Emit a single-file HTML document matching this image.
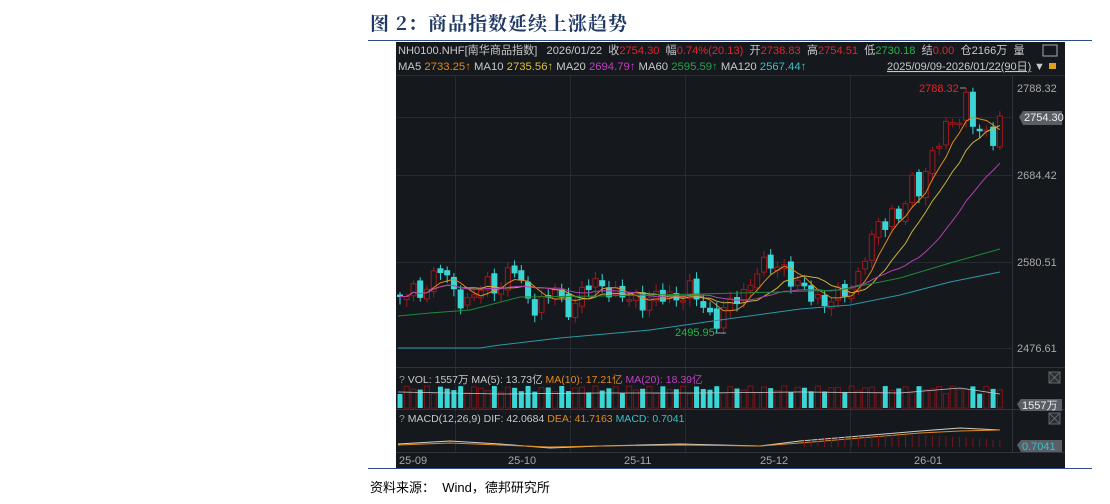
<!DOCTYPE html>
<html><head><meta charset="utf-8">
<style>
body{margin:0;width:1110px;height:504px;background:#fff;position:relative;overflow:hidden;font-family:"Liberation Sans","Noto Sans CJK SC",sans-serif}
.t{position:absolute;white-space:nowrap}
#chart{position:absolute;left:396px;top:42px;width:669px;height:426px;background:#15181d}
</style></head><body>
<div class="t" style="left:370px;top:9px;font-size:19px;font-weight:bold;color:#1f3864;font-family:'Noto Serif CJK SC','Liberation Serif',serif;letter-spacing:1px">图 2：商品指数延续上涨趋势</div>
<div style="position:absolute;left:368px;top:40px;width:724px;height:1px;background:#2f4a8a"></div>
<div style="position:absolute;left:368px;top:468px;width:724px;height:1px;background:#2f4a8a"></div>
<div class="t" style="left:370px;top:477px;font-size:13px;color:#000">资料来源：&nbsp; Wind，德邦研究所</div>
<svg id="chart" width="669" height="426" viewBox="396 42 669 426" xmlns="http://www.w3.org/2000/svg" font-family="Liberation Sans, Noto Sans CJK SC, sans-serif" font-size="11">
<rect x="396" y="42" width="669" height="426" fill="#15181d"/>
<g id="grid" stroke="#262a31" stroke-width="1"></g>
<line x1="1012.5" y1="75" x2="1012.5" y2="452" stroke="#30343b"/>
<line x1="396" y1="75.5" x2="1065" y2="75.5" stroke="#2a2e35"/>
<line x1="396" y1="367.5" x2="1065" y2="367.5" stroke="#30343b"/>
<line x1="396" y1="409.5" x2="1065" y2="409.5" stroke="#30343b"/>
<line x1="396" y1="452.5" x2="1065" y2="452.5" stroke="#30343b"/>
<g id="plot"></g>
<text x="398" y="54" fill="#c8c8c8" font-size="11.1">NH0100.NHF[南华商品指数]&#160;&#160; 2026/01/22&#160; 收<tspan fill="#e0262b">2754.30</tspan>&#160; 幅<tspan fill="#e0262b">0.74%(20.13)</tspan>&#160; 开<tspan fill="#e0262b">2738.83</tspan>&#160; 高<tspan fill="#e0262b">2754.51</tspan>&#160; 低<tspan fill="#27b34a">2730.18</tspan>&#160; 结<tspan fill="#e0262b">0.00</tspan>&#160; 仓2166万&#160; 量</text>
<rect x="1043" y="45" width="14" height="11" fill="none" stroke="#aaa"/>
<text x="398" y="70" fill="#c8c8c8" font-size="11.3">MA5 <tspan fill="#e08a1e">2733.25↑</tspan> MA10 <tspan fill="#d8c23a">2735.56↑</tspan> MA20 <tspan fill="#c040c0">2694.79↑</tspan> MA60 <tspan fill="#2aa04a">2595.59↑</tspan> MA120 <tspan fill="#39c0c8">2567.44↑</tspan></text>
<text x="887" y="70" fill="#c8c8c8" text-decoration="underline">2025/09/09-2026/01/22(90日)</text>
<text x="1034" y="70" fill="#c8c8c8">▼</text>
<rect x="1049" y="63" width="7" height="6" fill="#e0a020"/>
<g fill="#a8a8a8">
<text x="1017" y="92">2788.32</text><text x="1017" y="179">2684.42</text><text x="1017" y="266">2580.51</text><text x="1017" y="352">2476.61</text>
</g>
<path d="M1019 117 l4 -6 h39 v14 h-39z" fill="#5a5e66"/>
<text x="1024" y="121" fill="#eee">2754.30</text>
<text x="919" y="92" fill="#e0262b">2788.32</text><path d="M960 88 h6" stroke="#999"/>
<text x="675" y="336" fill="#27b34a">2495.95</text><path d="M715 333 h11" stroke="#999"/>
<text x="399" y="383" fill="#c8c8c8" font-size="10.5"><tspan fill="#999">?</tspan> VOL: 1557万 MA(5): 13.73亿 <tspan fill="#e08a1e">MA(10): 17.21亿</tspan> <tspan fill="#c040c0">MA(20): 18.39亿</tspan></text>
<text x="399" y="422" fill="#c8c8c8" font-size="10.5"><tspan fill="#999">?</tspan> MACD(12,26,9) DIF: 42.0684 <tspan fill="#e08a1e">DEA: 41.7163</tspan> <tspan fill="#39c0c8">MACD: 0.7041</tspan></text>
<g stroke="#666" fill="#2a2d33"><rect x="1049" y="372" width="11" height="11"/><path d="M1049 372l11 11M1060 372l-11 11"/><rect x="1049" y="413" width="11" height="11"/><path d="M1049 413l11 11M1060 413l-11 11"/></g>
<path d="M1017 404 l4 -5 h41 v12 h-41z" fill="#5a5e66"/><text x="1022" y="409" fill="#eee">1557万</text>
<path d="M1017 445 l4 -5 h41 v12 h-41z" fill="#5a5e66"/><text x="1022" y="450" fill="#39c0c8">0.7041</text>
<g fill="#a8a8a8"><text x="399" y="464">25-09</text><text x="508" y="464">25-10</text><text x="624" y="464">25-11</text><text x="760" y="464">25-12</text><text x="914" y="464">26-01</text></g>
</svg>
<script>
(function(){
var NS="http://www.w3.org/2000/svg",plot=document.getElementById('plot'),grid=document.getElementById('grid');
function el(t,a,p){var e=document.createElementNS(NS,t);for(var k in a)e.setAttribute(k,a[k]);(p||plot).appendChild(e);return e;}
[117,175,262,348].forEach(function(y){el('line',{x1:396,x2:1012,y1:y+.5,y2:y+.5},grid)});
[455,570,685,850].forEach(function(x){el('line',{x1:x+.5,x2:x+.5,y1:76,y2:452},grid)});
var A=[[398,297],[420,292],[440,268],[452,290],[466,302],[487,285],[500,285],[513,266],[525,295],[535,305],[545,300],[555,290],[565,310],[575,302],[590,285],[605,283],[615,295],[630,300],[640,300],[660,298],[680,295],[690,290],[700,303],[715,320],[730,305],[745,292],[755,270],[770,266],[785,266],[795,285],[810,295],[825,300],[835,300],[845,292],[855,285],[862,258],[870,248],[878,225],[885,223],[893,210],[902,215],[912,185],[920,190],[930,155],[940,140],[950,125],[958,120],[966,95],[975,130],[985,138],[992,140],[1000,118]];
function interp(x){for(var j=1;j<A.length;j++){if(x<=A[j][0]){var a=A[j-1],b=A[j];return a[1]+(b[1]-a[1])*(x-a[0])/(b[0]-a[0]);}}return A[A.length-1][1];}
var N=90,cl=[],xs=[],i;
for(i=0;i<N;i++){var x=400+i*6.74;xs.push(x);cl.push(interp(x)+7*Math.sin(i*2.3)+4*Math.sin(i*5.1));}
cl[N-1]=116;
var op=[];for(i=0;i<N;i++)op.push(i?cl[i-1]+3*Math.sin(i*1.7):295);
for(i=0;i<N;i++){var o=op[i],c=cl[i],up=c<o,tp=Math.min(o,c),bt=Math.max(o,c),h=Math.max(bt-tp,1.5);
var hi=tp-3-4*Math.abs(Math.sin(i*3.1)),lo=bt+3+5*Math.abs(Math.cos(i*2.7));
var col=up?'#a0181c':'#3ad5d5';
el('line',{x1:xs[i],x2:xs[i],y1:hi,y2:lo,stroke:col});
el('rect',{x:xs[i]-2.5,y:tp,width:5,height:h,fill:up?'#15181d':col,stroke:col,'stroke-width':1});
var vh=14+8*Math.abs(Math.sin(i*1.9));
el('rect',{x:xs[i]-2.5,y:408-vh,width:5,height:vh,fill:up?'none':'#3ad5d5',stroke:up?'#7a1518':'none'});
}
function ma(n,colr){var pts=[];for(var i=0;i<N;i++){var s=0,k=0;for(var j=Math.max(0,i-n+1);j<=i;j++){s+=cl[j];k++;}pts.push(xs[i]+','+(s/k).toFixed(1));}el('polyline',{points:pts.join(' '),fill:'none',stroke:colr,'stroke-width':1});}
ma(5,'#e08a1e');ma(10,'#c8b23a');ma(20,'#b040b0');
el('polyline',{points:'398,316 430,313 470,310 520,297 600,296 700,294 780,292 840,290 900,278 950,263 1000,249',fill:'none',stroke:'#1f8a3a'});
el('polyline',{points:'398,348 480,348 500,345 560,338 650,330 720,320 800,309 850,305 900,295 950,282 1000,272',fill:'none',stroke:'#2a9aa8'});
el('polyline',{points:'398,392 500,394 600,393 700,393 800,392 900,393 960,388 1000,394',fill:'none',stroke:'#c8c8c8','stroke-width':0.8});
el('polyline',{points:'398,444 450,441 500,444 550,448 600,446 680,444 760,446 800,441 860,436 920,431 960,428 1000,430',fill:'none',stroke:'#d0d0d0','stroke-width':1});
el('polyline',{points:'398,445 450,443 500,445 550,447 600,446 680,445 760,446 800,443 860,438 920,433 960,431 1000,430',fill:'none',stroke:'#e08a1e','stroke-width':1});
for(i=0;i<N;i++){var xx=xs[i];if(xx>800)el('line',{x1:xx,x2:xx,y1:447,y2:440-Math.sin((xx-800)/200*3.14)*5,stroke:'#7a1518'});}
})();
</script>
</body></html>
